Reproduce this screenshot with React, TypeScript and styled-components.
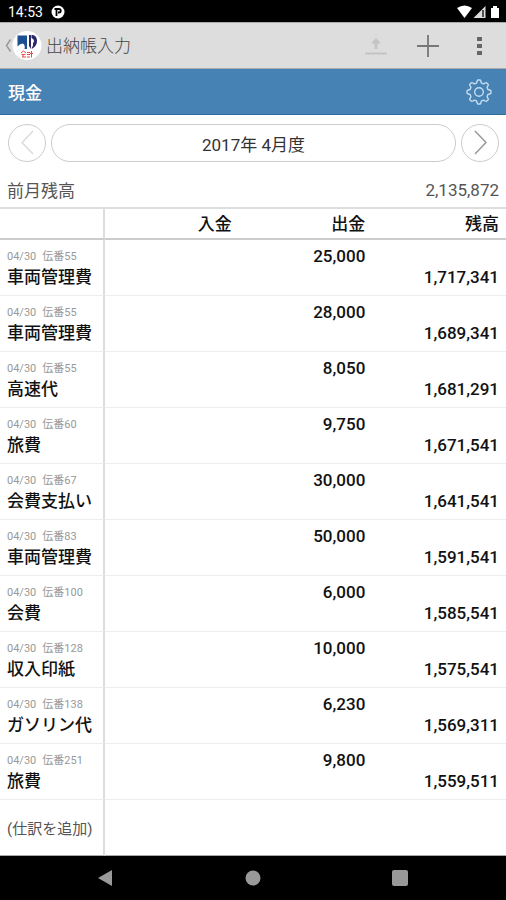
import React from "react";
import styled, { createGlobalStyle } from "styled-components";

interface Entry {
  date: string;
  slip: string;
  title: string;
  paid: string;
  balance: string;
}

const entries: Entry[] = [
  { date: "04/30", slip: "伝番55", title: "車両管理費", paid: "25,000", balance: "1,717,341" },
  { date: "04/30", slip: "伝番55", title: "車両管理費", paid: "28,000", balance: "1,689,341" },
  { date: "04/30", slip: "伝番55", title: "高速代", paid: "8,050", balance: "1,681,291" },
  { date: "04/30", slip: "伝番60", title: "旅費", paid: "9,750", balance: "1,671,541" },
  { date: "04/30", slip: "伝番67", title: "会費支払い", paid: "30,000", balance: "1,641,541" },
  { date: "04/30", slip: "伝番83", title: "車両管理費", paid: "50,000", balance: "1,591,541" },
  { date: "04/30", slip: "伝番100", title: "会費", paid: "6,000", balance: "1,585,541" },
  { date: "04/30", slip: "伝番128", title: "収入印紙", paid: "10,000", balance: "1,575,541" },
  { date: "04/30", slip: "伝番138", title: "ガソリン代", paid: "6,230", balance: "1,569,311" },
  { date: "04/30", slip: "伝番251", title: "旅費", paid: "9,800", balance: "1,559,511" },
];

// Outline of an eight-toothed gear around (13, 13)
const gearPath = () => {
  const points: string[] = [];
  for (let i = 0; i < 8; i++) {
    const middle = (i * Math.PI) / 4;
    [
      [-0.27, 9.3],
      [-0.19, 10.6],
      [-0.11, 12],
      [0.11, 12],
      [0.19, 10.6],
      [0.27, 9.3],
    ].forEach(([turn, radius]) => {
      const x = 13 + radius * Math.sin(middle + turn);
      const y = 13 - radius * Math.cos(middle + turn);
      points.push(`${x.toFixed(2)} ${y.toFixed(2)}`);
    });
  }
  return `M${points.join("L")}Z`;
};

export default function App() {
  return (
    <Screen>
      <GlobalStyle />
      <StatusBar>
        <StatusGroup>
          <span>14:53</span>
          <svg width="14" height="14" viewBox="0 0 14 14">
            <circle cx="7" cy="7" r="6.5" fill="#fff" />
            <path d="M5.5 11V4M3.5 4H8a1.500 1.500 0 0 1 0 3.500H7" fill="none" stroke="#000" strokeWidth="1.800" />
          </svg>
        </StatusGroup>
        <svg width="44" height="14" viewBox="0 0 44 14">
          <path d="M0 3Q7.5-2 15 3L7.5 13Z" fill="#fff" />
          <path d="M28.500 1V13H16.500Z" fill="#ddd" />
          <path d="M26 5v7" stroke="#222" strokeWidth="1.5" />
          <path d="M34 3h2V1h4v2h2v10h-8Z" fill="#fff" />
        </svg>
      </StatusBar>
      <AppBar>
        <BackButton aria-label="戻る">
          <svg width="37" height="30" viewBox="0 0 37 30">
            <path d="M5.5 8.5L1.500 14.500L5.5 20.500" fill="none" stroke="#999" strokeWidth="1.5" />
            <circle cx="22" cy="14.500" r="14.5" fill="#fff" />
            <path d="M12.500 4.500H22V18h-2.500q1-4-1.500-5.500q-3 0-5.500 3Z" fill="#1c4f91" />
            <path d="M24 4h2v14l-2-3Z" fill="#29286d" />
            <path d="M26.500 4h1.500q4 1 4 6t-4.500 7.500h-1l1.500-3v-2.500q2-2 0-4l-1.500-1Z" fill="#29286d" />
            <path d="M16 22l2.500-2 2.500 2M16.500 23.500h4M17 26h4M18 23.500v2.500M22 21.500h3M22 23.500h3M22 26h3M26.500 20v6.500M25 22.500h3" fill="none" stroke="#e34a4a" />
          </svg>
        </BackButton>
        <Title>出納帳入力</Title>
        <BarButton aria-label="アップロード" disabled>
          <svg width="22" height="20" viewBox="0 0 22 20">
            <path d="M11 2L16 7.500H12.500V13H9.5V7.500H6ZM0 16.500h22v2H0Z" fill="#c4c4c4" />
          </svg>
        </BarButton>
        <BarButton aria-label="追加">
          <svg width="24" height="24" viewBox="0 0 24 24">
            <path d="M12 1V23M1 12H23" stroke="#777" strokeWidth="1.8" />
          </svg>
        </BarButton>
        <BarButton aria-label="メニュー">
          <svg width="6" height="20" viewBox="0 0 6 20">
            <path d="M0 1h5v4H0ZM0 8h5v4H0ZM0 15h5v4H0Z" fill="#666" />
          </svg>
        </BarButton>
      </AppBar>
      <AccountBar>
        <AccountName>現金</AccountName>
        <PlainButton aria-label="設定">
          <svg width="26" height="26" viewBox="0 0 26 26" fill="none" stroke="#c6dbee" strokeWidth="1.4" strokeLinejoin="round">
            <path d={gearPath()} />
            <circle cx="13" cy="13" r="4.3" />
          </svg>
        </PlainButton>
      </AccountBar>
      <PeriodRow>
        <RoundButton aria-label="前の月" disabled>
          <svg width="36" height="36" viewBox="0 0 36 36">
            <path d="M24 6L13 17.500L24 29" fill="none" stroke="#d8d8d8" strokeWidth="1.3" />
          </svg>
        </RoundButton>
        <PeriodButton>2017年 4月度</PeriodButton>
        <RoundButton aria-label="次の月">
          <svg width="36" height="36" viewBox="0 0 36 36">
            <path d="M13 6L24 17.500L13 29" fill="none" stroke="#999" strokeWidth="1.5" />
          </svg>
        </RoundButton>
      </PeriodRow>
      <CarriedRow>
        <span>前月残高</span>
        <span>2,135,872</span>
      </CarriedRow>
      <Ledger>
        <thead>
          <tr>
            <DetailHeadCell aria-label="摘要" />
            <HeadCell>入金</HeadCell>
            <HeadCell>出金</HeadCell>
            <HeadCell>残高</HeadCell>
          </tr>
        </thead>
        <tbody>
          {entries.map((entry, index) => (
            <tr key={index}>
              <DetailCell>
                <Slip>
                  <span>{entry.date}</span>
                  <span>{entry.slip}</span>
                </Slip>
                <EntryTitle>{entry.title}</EntryTitle>
              </DetailCell>
              <AmountCell />
              <AmountCell>{entry.paid}</AmountCell>
              <AmountCell $low>{entry.balance}</AmountCell>
            </tr>
          ))}
          <tr>
            <DetailCell $middle>
              <AddButton>(仕訳を追加)</AddButton>
            </DetailCell>
            <AmountCell colSpan={3} />
          </tr>
        </tbody>
      </Ledger>
      <NavigationBar>
        <PlainButton aria-label="戻る">
          <svg width="16" height="16" viewBox="0 0 16 16">
            <path d="M0 8L14 0V16Z" fill="#999" />
          </svg>
        </PlainButton>
        <PlainButton aria-label="ホーム">
          <svg width="16" height="16" viewBox="0 0 16 16">
            <circle cx="8" cy="8" r="7.5" fill="#999" />
          </svg>
        </PlainButton>
        <PlainButton aria-label="アプリ履歴">
          <svg width="16" height="16" viewBox="0 0 16 16">
            <rect width="16" height="16" rx="2" fill="#999" />
          </svg>
        </PlainButton>
      </NavigationBar>
    </Screen>
  );
}

const GlobalStyle = createGlobalStyle`
  * {
    box-sizing: border-box;
  }

  body {
    margin: 0;
    background: #fff;
    color: #111;
    font-family: Roboto, "Noto Sans CJK JP", sans-serif;
    font-size: 17px;
  }

  button {
    font: inherit;
    color: inherit;
  }

  svg {
    display: block;
  }
`;

const Screen = styled.div`
  display: flex;
  flex-direction: column;
  min-height: 100vh;
`;

const StatusBar = styled.div`
  display: flex;
  align-items: center;
  justify-content: space-between;
  height: 22px;
  padding: 2px 5px 0 8px;

  background: #000;
  color: #fff;
  font-size: 14px;
  line-height: 20px;
`;

const StatusGroup = styled.div`
  display: flex;
  align-items: center;
  gap: 8px;
`;

const PlainButton = styled.button`
  display: flex;
  align-items: center;
  justify-content: center;
  padding: 0;

  border: none;
  background: none;
`;

const AppBar = styled.header`
  display: flex;
  align-items: center;
  height: 47px;

  border-top: 1px solid #aaa;
  border-bottom: 1px solid #aaa;
  background: #ddd;
`;

const BackButton = styled(PlainButton)`
  padding-left: 5px;
`;

const Title = styled.h1`
  flex: 1;
  margin: 0;
  padding-left: 4px;

  color: #444;
  font-size: 17px;
  font-weight: 300;
  line-height: 24px;
`;

const BarButton = styled(PlainButton)`
  width: 52px;
  height: 44px;
`;

const AccountBar = styled.div`
  display: flex;
  align-items: center;
  justify-content: space-between;
  height: 46px;
  padding: 0 14px 0 8px;

  border-bottom: 1px solid #2f6f9f;
  background: #4682b4;
`;

const AccountName = styled.h2`
  margin: 0;

  color: #fff;
  font-size: 17px;
  font-weight: 500;
`;

const PeriodRow = styled.div`
  display: flex;
  gap: 5px;
  padding: 9px 7px 8px 8px;
`;

const RoundButton = styled(PlainButton)`
  width: 38px;
  height: 38px;

  border: 1px solid #ccc;
  border-radius: 50%;
`;

const PeriodButton = styled(PlainButton)`
  flex: 1;

  border: 1px solid #ccc;
  border-radius: 19px;
  color: #333;
`;

const CarriedRow = styled.div`
  display: flex;
  align-items: center;
  justify-content: space-between;
  height: 37px;
  padding: 2px 7px 0;

  color: #555;
`;

const Ledger = styled.table`
  width: 100%;

  border-collapse: separate;
  border-spacing: 0;
  table-layout: fixed;
`;

const HeadCell = styled.th`
  height: 33px;
  padding: 0 7px 0 0;

  border-top: 2px solid #ddd;
  border-bottom: 2px solid #ccc;
  font-weight: 500;
  line-height: 24px;
  text-align: right;
`;

const DetailHeadCell = styled(HeadCell)`
  width: 105px;

  border-right: 2px solid #ddd;
`;

const BodyCell = styled.td`
  height: 56px;

  border-bottom: 1px solid #eee;

  tr:last-child > & {
    border-bottom-color: #aaa;
  }
`;

const DetailCell = styled(BodyCell)<{ $middle?: boolean }>`
  padding: ${(props) => (props.$middle ? "0" : "8px")} 0 0 7px;

  border-right: 2px solid #ddd;
  vertical-align: ${(props) => (props.$middle ? "middle" : "top")};
  white-space: nowrap;
`;

const Slip = styled.div`
  display: flex;
  gap: 6px;

  color: #999;
  font-size: 11px;
  line-height: 18px;
`;

const EntryTitle = styled.div`
  font-weight: 500;
  line-height: 22px;
`;

const AmountCell = styled(BodyCell)<{ $low?: boolean }>`
  padding: ${(props) => (props.$low ? "26px" : "5px")} 7px 0 0;

  font-weight: 500;
  line-height: 22px;
  text-align: right;
  vertical-align: top;
`;

const AddButton = styled(PlainButton)`
  color: #555;
  font-size: 15px;
`;

const NavigationBar = styled.nav`
  display: grid;
  flex: 1;
  grid-template-columns: repeat(3, 1fr);
  align-items: center;
  min-height: 44px;
  padding: 0 32px;

  background: #000;
`;
